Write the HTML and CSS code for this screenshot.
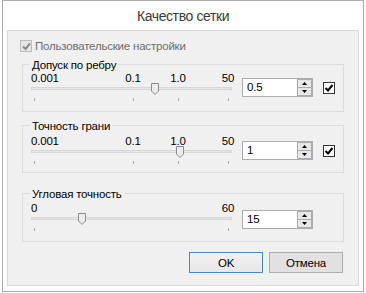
FILE: index.html
```html
<!DOCTYPE html>
<html lang="ru">
<head>
    <meta charset="utf-8" />
    <title>Качество сетки</title>
    <link rel="stylesheet" href="styles.css">
</head>
<body>
    <div class="window">
        <div class="title">Качество сетки</div>
        <div class="panel">
            <label class="custom-row">
                <span class="check check-disabled">
                    <svg width="9" height="9" viewBox="0 0 9 9"><path d="M1 4.5 L3.5 7 L8 1.5" fill="none" stroke="#8a8a8a" stroke-width="2"/></svg>
                </span>
                Пользовательские настройки
            </label>

            <div class="group">
                <div class="group-title">Допуск по ребру</div>
                <div class="group-body">
                    <div class="scale">
                        <div class="scale-labels">
                            <span class="start">0.001</span>
                            <span style="left:102px">0.1</span>
                            <span style="left:147px">1.0</span>
                            <span style="left:197px">50</span>
                        </div>
                        <div class="track">
                            <span class="thumb" style="left:119px"><svg width="8" height="12" viewBox="0 0 8 12"><path d="M0.5 0.5 H7.5 V8 L4 11.5 L0.5 8 Z" fill="#ececec" stroke="#8c8c8c"/></svg></span>
                        </div>
                        <div class="ticks">
                            <i style="left:3px"></i><i style="left:102px"></i><i style="left:147px"></i><i style="left:197px"></i>
                        </div>
                    </div>
                    <div class="spin">
                        <span class="spin-value">0.5</span>
                        <span class="spin-buttons">
                            <span class="spin-btn"><svg width="5" height="3" viewBox="0 0 5 3"><path d="M0 3 L2.5 0 L5 3 Z" fill="#000"/></svg></span>
                            <span class="spin-btn"><svg width="5" height="3" viewBox="0 0 5 3"><path d="M0 0 L5 0 L2.5 3 Z" fill="#000"/></svg></span>
                        </span>
                    </div>
                    <span class="check">
                        <svg width="10" height="10" viewBox="0 0 10 10"><path d="M1.5 5 L4 7.5 L8.5 2" fill="none" stroke="#000" stroke-width="2"/></svg>
                    </span>
                </div>
            </div>

            <div class="group second">
                <div class="group-title">Точность грани</div>
                <div class="group-body">
                    <div class="scale">
                        <div class="scale-labels">
                            <span class="start">0.001</span>
                            <span style="left:102px">0.1</span>
                            <span style="left:147px">1.0</span>
                            <span style="left:197px">50</span>
                        </div>
                        <div class="track">
                            <span class="thumb" style="left:144px"><svg width="8" height="12" viewBox="0 0 8 12"><path d="M0.5 0.5 H7.5 V8 L4 11.5 L0.5 8 Z" fill="#ececec" stroke="#8c8c8c"/></svg></span>
                        </div>
                        <div class="ticks">
                            <i style="left:3px"></i><i style="left:102px"></i><i style="left:147px"></i><i style="left:197px"></i>
                        </div>
                    </div>
                    <div class="spin">
                        <span class="spin-value">1</span>
                        <span class="spin-buttons">
                            <span class="spin-btn"><svg width="5" height="3" viewBox="0 0 5 3"><path d="M0 3 L2.5 0 L5 3 Z" fill="#000"/></svg></span>
                            <span class="spin-btn"><svg width="5" height="3" viewBox="0 0 5 3"><path d="M0 0 L5 0 L2.5 3 Z" fill="#000"/></svg></span>
                        </span>
                    </div>
                    <span class="check">
                        <svg width="10" height="10" viewBox="0 0 10 10"><path d="M1.5 5 L4 7.5 L8.5 2" fill="none" stroke="#000" stroke-width="2"/></svg>
                    </span>
                </div>
            </div>

            <div class="group third">
                <div class="group-title">Угловая точность</div>
                <div class="group-body">
                    <div class="scale">
                        <div class="scale-labels">
                            <span class="start">0</span>
                            <span style="left:197px">60</span>
                        </div>
                        <div class="track">
                            <span class="thumb" style="left:46px"><svg width="8" height="12" viewBox="0 0 8 12"><path d="M0.5 0.5 H7.5 V8 L4 11.5 L0.5 8 Z" fill="#ececec" stroke="#8c8c8c"/></svg></span>
                        </div>
                        <div class="ticks">
                            <i style="left:3px"></i><i style="left:197px"></i>
                        </div>
                    </div>
                    <div class="spin">
                        <span class="spin-value">15</span>
                        <span class="spin-buttons">
                            <span class="spin-btn"><svg width="5" height="3" viewBox="0 0 5 3"><path d="M0 3 L2.5 0 L5 3 Z" fill="#000"/></svg></span>
                            <span class="spin-btn"><svg width="5" height="3" viewBox="0 0 5 3"><path d="M0 0 L5 0 L2.5 3 Z" fill="#000"/></svg></span>
                        </span>
                    </div>
                </div>
            </div>

            <div class="actions">
                <button class="dialog-button default">OK</button>
                <button class="dialog-button">Отмена</button>
            </div>
        </div>
    </div>
</body>
</html>
```

FILE: styles.css
```css
body {
    margin: 0;
    background: #fff;
    font-family: "Liberation Sans", Arial, sans-serif;
    font-size: 11.5px;
    letter-spacing: -0.2px;
    color: #000;
}

.window {
    width: 360px;
    height: 290px;
    margin-left: 2px;
    border: 1px solid #adadad;
    background: #fff;
}

.title {
    height: 29px;
    line-height: 31px;
    text-align: center;
    font-size: 14px;
    letter-spacing: -0.4px;
    color: #3a3a3a;
}

.panel {
    height: 256px;
    margin: 0 4px;
    padding: 7px 14px 0 14px;
    box-sizing: border-box;
    border: 1px solid #d9d9d9;
    background: #f0f0f0;
}

.custom-row {
    display: flex;
    align-items: center;
    height: 16px;
    margin-left: -2px;
    color: #6d6d6d;
}

.check {
    display: inline-flex;
    align-items: center;
    justify-content: center;
    width: 10px;
    height: 10px;
    border: 1px solid #333;
    background: #fff;
}

.check-disabled {
    border-color: #bcbcbc;
    background: #e6e6e6;
    margin-right: 3px;
}

.group {
    height: 48px;
    margin-top: 10px;
    box-sizing: border-box;
    border: 1px solid #dcdcdc;
    padding-left: 8px;
}

.group.second {
    margin-top: 13px;
}

.group.third {
    margin-top: 20px;
    height: 49px;
}

.group-title {
    width: fit-content;
    height: 12px;
    line-height: 12px;
    margin: -6px 0 0 -1px;
    padding: 0 2px;
    background: #f0f0f0;
}

.group-body {
    display: flex;
    align-items: flex-start;
}

.second .group-body {
    margin-top: 2px;
}

.third .group-body {
    margin-top: 1px;
}

.third .spin {
    margin-top: 9px;
}

.scale {
    width: 201px;
}

.scale-labels {
    position: relative;
    height: 14px;
    line-height: 14px;
}

.scale-labels span {
    position: absolute;
    top: 0;
    transform: translateX(-50%);
    white-space: nowrap;
}

.scale-labels .start {
    left: 0;
    transform: none;
}

.track {
    position: relative;
    height: 1px;
    margin-top: 2px;
    border: 1px solid #d6d6d6;
    background: #e7e7e7;
}

.thumb {
    position: absolute;
    top: -5px;
    line-height: 0;
}

.ticks {
    position: relative;
    height: 4px;
    margin-top: 8px;
}

.ticks i {
    position: absolute;
    top: 0;
    width: 1px;
    height: 3px;
    background: #a8a8a8;
}

.spin {
    display: flex;
    width: 71px;
    height: 19px;
    margin: 7px 0 0 10px;
    box-sizing: border-box;
    border: 1px solid #abadb3;
    background: #fff;
}

.spin-value {
    flex: 1;
    padding-left: 4px;
    line-height: 17px;
}

.spin-buttons {
    display: flex;
    flex-direction: column;
    width: 15px;
}

.spin-btn {
    flex: 1;
    display: flex;
    align-items: center;
    justify-content: center;
    border: 1px solid #acacac;
    background: #e8e8e8;
}

.spin-btn + .spin-btn {
    border-top: none;
}

.group-body .check {
    margin: 11px 0 0 10px;
}

.actions {
    display: flex;
    justify-content: flex-end;
    gap: 6px;
    margin: 10px 1px 0 0;
}

.dialog-button {
    width: 74px;
    height: 21px;
    padding: 0;
    font-family: "Liberation Sans", Arial, sans-serif;
    font-size: 11.5px;
    letter-spacing: -0.2px;
    color: #000;
    border: 1px solid #adadad;
    background: #e1e1e1;
}

.dialog-button.default {
    border-color: #3c8ccf;
    background: linear-gradient(#f2f2f2, #e6e6e6);
}
```
